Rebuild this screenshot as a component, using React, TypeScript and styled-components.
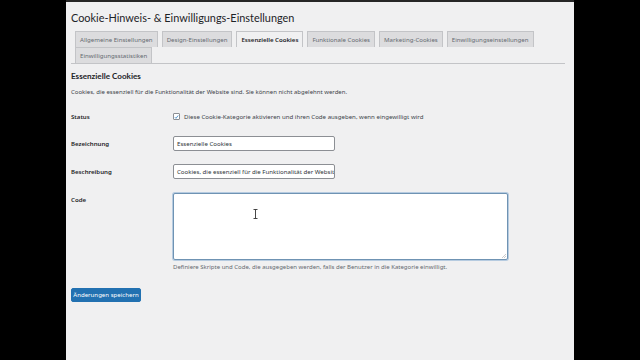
import React from 'react';
import styled, { createGlobalStyle } from 'styled-components';

const GlobalStyle = createGlobalStyle`
  html, body {
    margin: 0;
    padding: 0;
    background: #000;
  }
  body {
    font-family: "Noto Sans", "Liberation Sans", sans-serif;
    color: #1d2327;
  }
`;

const Frame = styled.div`
  width: 640px;
  height: 360px;
  display: grid;
  grid-template-columns: 66px 508px 66px;
  background: #000;
  overflow: hidden;
`;

const Panel = styled.main`
  grid-column: 2;
  background: #f0f0f1;
  border-top: 2px solid #262626;
  padding: 8px 9px 0 5px;
  display: flex;
  flex-direction: column;
`;

const Title = styled.h1`
  margin: 0;
  font-family: Lato, "Noto Sans", sans-serif;
  font-size: 10.9px;
  line-height: 16px;
  font-weight: 400;
  color: #1d2327;
`;

const TabBar = styled.nav`
  margin-top: 5px;
  display: flex;
  flex-wrap: wrap;
  column-gap: 4px;
  padding-left: 4px;
  border-bottom: 1px solid #c3c4c7;
`;

const Tab = styled.span<{ $active?: boolean }>`
  height: 16px;
  box-sizing: border-box;
  padding: 0 4px;
  display: flex;
  align-items: center;
  font-size: 6.1px;
  font-weight: ${(p) => (p.$active ? 600 : 400)};
  border: 1px solid #c3c4c7;
  border-bottom: none;
  background: ${(p) => (p.$active ? '#f0f0f1' : '#dcdcde')};
  color: ${(p) => (p.$active ? '#1d2327' : '#646970')};
  white-space: nowrap;
`;

const Heading = styled.h2`
  margin: 6px 0 0;
  font-family: Lato, "Noto Sans", sans-serif;
  font-size: 8.1px;
  line-height: 12px;
  font-weight: 700;
`;

const Intro = styled.p`
  margin: 5px 0 0;
  font-size: 6px;
  line-height: 10px;
  color: #3c434a;
`;

const Form = styled.div`
  margin-top: 12px;
  display: flex;
  flex-direction: column;
  gap: 13px;
`;

const Row = styled.div<{ $gapTop?: number }>`
  display: grid;
  grid-template-columns: 102px 1fr;
  align-items: start;
  margin-top: ${(p) => p.$gapTop ?? 0}px;
`;

const Label = styled.label<{ $lift?: number }>`
  font-size: 6.1px;
  line-height: 15px;
  font-weight: 600;
  color: #1d2327;
  margin-top: ${(p) => -(p.$lift ?? 0)}px;
`;

const Check = styled.span`
  display: flex;
  align-items: center;
  gap: 4px;
  height: 15px;
  font-size: 6.1px;
  color: #3c434a;
`;

const Box = styled.span`
  width: 7px;
  height: 7px;
  box-sizing: border-box;
  border: 1px solid #8c8f94;
  border-radius: 1px;
  background: #fff;
  display: flex;
  align-items: center;
  justify-content: center;
`;

const Input = styled.div`
  width: 162px;
  height: 15px;
  box-sizing: border-box;
  border: 1px solid #8c8f94;
  border-radius: 2px;
  background: #fff;
  padding: 0 3px;
  display: flex;
  align-items: center;
  font-size: 6.1px;
  color: #2c3338;
  white-space: nowrap;
  overflow: hidden;
`;

const Field = styled.div`
  display: flex;
  flex-direction: column;
`;

const TextArea = styled.div`
  position: relative;
  width: 335px;
  height: 67px;
  box-sizing: border-box;
  border: 1px solid #6f93b3;
  border-radius: 2px;
  background: #fff;
  box-shadow: 0 0 0 1px #b6cbe0;
`;

const Grip = styled.svg`
  position: absolute;
  right: 1px;
  bottom: 1px;
`;

const Cursor = styled.svg`
  position: absolute;
  left: 79px;
  top: 15px;
`;

const Help = styled.p`
  margin: 3px 0 0;
  font-size: 6px;
  line-height: 9px;
  color: #646970;
`;

const SaveButton = styled.button`
  margin-top: 16px;
  align-self: flex-start;
  width: 70px;
  height: 14px;
  padding: 0;
  border: 1px solid #2271b1;
  border-radius: 2px;
  background: #2271b1;
  color: #fff;
  font-family: inherit;
  font-size: 6.1px;
  line-height: 12px;
`;

const tabs = [
  'Allgemeine Einstellungen',
  'Design-Einstellungen',
  'Essenzielle Cookies',
  'Funktionale Cookies',
  'Marketing-Cookies',
  'Einwilligungseinstellungen',
  'Einwilligungsstatistiken',
];

export default function App() {
  return (
    <>
      <GlobalStyle />
      <Frame>
        <Panel>
          <Title>Cookie-Hinweis- &amp; Einwilligungs-Einstellungen</Title>
          <TabBar>
            {tabs.map((t) => (
              <Tab key={t} $active={t === 'Essenzielle Cookies'}>
                {t}
              </Tab>
            ))}
          </TabBar>

          <Heading>Essenzielle Cookies</Heading>
          <Intro>
            Cookies, die essenziell für die Funktionalität der Website sind. Sie können nicht abgelehnt werden.
          </Intro>

          <Form>
            <Row>
              <Label>Status</Label>
              <Check>
                <Box>
                  <svg width="6" height="6" viewBox="0 0 6 6">
                    <path d="M1 3.2 L2.4 4.6 L5 1.2" fill="none" stroke="#3582c4" strokeWidth="1" />
                  </svg>
                </Box>
                Diese Cookie-Kategorie aktivieren und ihren Code ausgeben, wenn eingewilligt wird
              </Check>
            </Row>
            <Row $gapTop={-1}>
              <Label>Bezeichnung</Label>
              <Input>Essenzielle Cookies</Input>
            </Row>
            <Row>
              <Label>Beschreibung</Label>
              <Input>Cookies, die essenziell für die Funktionalität der Websit</Input>
            </Row>
            <Row $gapTop={1}>
              <Label $lift={1}>Code</Label>
              <Field>
                <TextArea>
                  <Cursor width="5" height="10" viewBox="0 0 5 10">
                    <path d="M0.5 0.5 H4.5 M2.5 0.5 V9.5 M0.5 9.5 H4.5" stroke="#333" strokeWidth="0.9" fill="none" />
                  </Cursor>
                  <Grip width="5" height="5" viewBox="0 0 5 5">
                    <path d="M1 5 L5 1 M3 5 L5 3" stroke="#a7aaad" strokeWidth="0.6" />
                  </Grip>
                </TextArea>
                <Help>Definiere Skripte und Code, die ausgegeben werden, falls der Benutzer in die Kategorie einwilligt.</Help>
              </Field>
            </Row>
          </Form>

          <SaveButton>Änderungen speichern</SaveButton>
        </Panel>
      </Frame>
    </>
  );
}
